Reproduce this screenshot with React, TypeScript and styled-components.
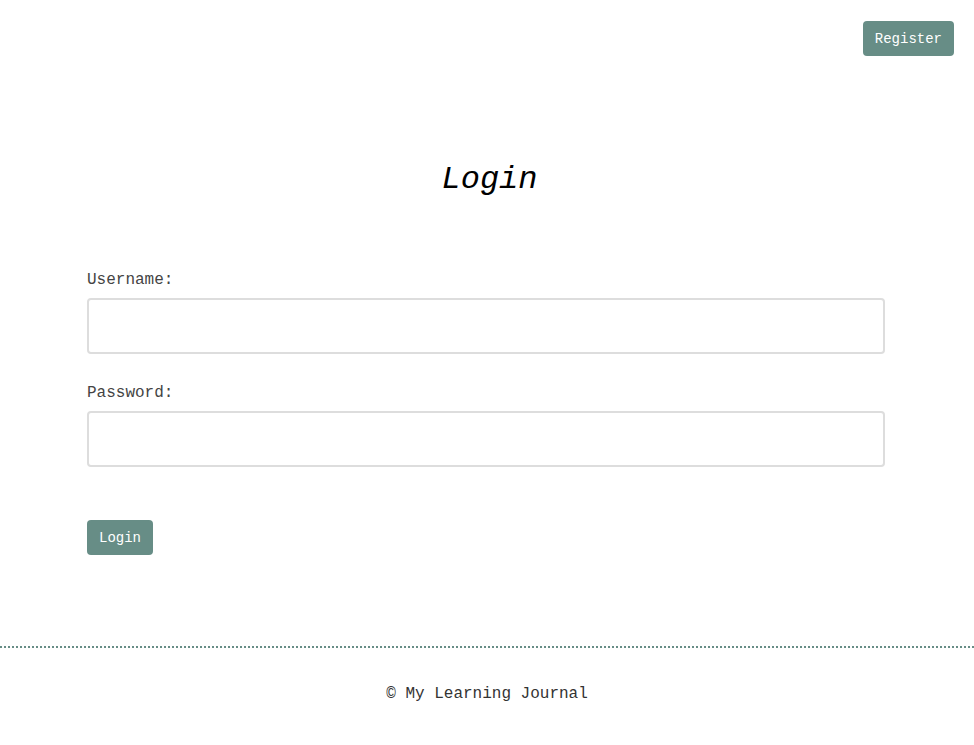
import React from 'react';
import styled, { createGlobalStyle } from 'styled-components';

const GlobalStyle = createGlobalStyle`
  body {
    margin: 0;
    background: #fff;
    font-family: 'Liberation Mono', 'Courier New', monospace;
    color: #333;
  }
`;

const accent = '#678d86';

const Header = styled.header`
  display: flex;
  justify-content: flex-end;
  padding: 21px 20px 0;
`;

const Button = styled.button`
  height: 35px;
  padding: 0 12px;
  border: none;
  border-radius: 4px;
  background-color: ${accent};
  color: #fff;
  font-family: 'Liberation Mono', 'Courier New', monospace;
  font-size: 14px;
  cursor: pointer;
`;

const Main = styled.main`
  margin: 0 89px 0 87px;
  padding: 105px 0 91px;
`;

const Title = styled.h1`
  margin: 0;
  padding-left: 7px;
  font-size: 32px;
  font-style: italic;
  font-weight: normal;
  line-height: 37px;
  text-align: center;
  color: #000;
`;

const Form = styled.form`
  display: flex;
  flex-direction: column;
  margin-top: 73px;
`;

const Field = styled.div<{ $last?: boolean }>`
  display: flex;
  flex-direction: column;
  gap: 8px;
  margin-bottom: ${({ $last }) => ($last ? '53px' : '30px')};
`;

const Label = styled.label`
  font-size: 16px;
  line-height: 19px;
  color: #444;
`;

const Input = styled.input`
  height: 56px;
  box-sizing: border-box;
  border: 2px solid #ddd;
  border-radius: 4px;
  padding: 0 10px;
  font-family: inherit;
  font-size: 16px;
`;

const SubmitRow = styled.div`
  display: flex;
`;

const Footer = styled.footer`
  border-top: 2px dotted ${accent};
  padding: 37px 0 40px;
  text-align: center;
  font-size: 16px;
  line-height: 19px;
  color: #333;
`;

export default function App() {
  return (
    <>
      <GlobalStyle />
      <Header>
        <Button type="button">Register</Button>
      </Header>
      <Main>
        <Title>Login</Title>
        <Form onSubmit={(e) => e.preventDefault()}>
          <Field>
            <Label htmlFor="username">Username:</Label>
            <Input id="username" type="text" />
          </Field>
          <Field $last>
            <Label htmlFor="password">Password:</Label>
            <Input id="password" type="password" />
          </Field>
          <SubmitRow>
            <Button type="submit">Login</Button>
          </SubmitRow>
        </Form>
      </Main>
      <Footer>© My Learning Journal</Footer>
    </>
  );
}
